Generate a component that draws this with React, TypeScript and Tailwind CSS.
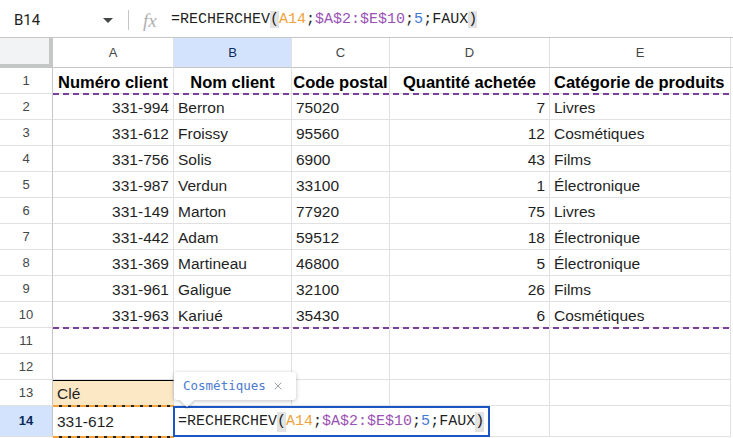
import { X } from 'lucide-react'

const widths = ['w-[53px]', 'w-[121px]', 'w-[118px]', 'w-[98px]', 'w-[160px]', 'w-[181px]']

const data = [
  ['331-994', 'Berron', '75020', '7', 'Livres'],
  ['331-612', 'Froissy', '95560', '12', 'Cosmétiques'],
  ['331-756', 'Solis', '6900', '43', 'Films'],
  ['331-987', 'Verdun', '33100', '1', 'Électronique'],
  ['331-149', 'Marton', '77920', '75', 'Livres'],
  ['331-442', 'Adam', '59512', '18', 'Électronique'],
  ['331-369', 'Martineau', '46800', '5', 'Électronique'],
  ['331-961', 'Galigue', '32100', '26', 'Films'],
  ['331-963', 'Kariué', '35430', '6', 'Cosmétiques'],
]

function Formula() {
  return (
    <>
      =RECHERCHEV<span className="bg-[#e3e3e3]">(</span>
      <span className="text-[#f0a33a]">A14</span>;
      <span className="text-[#9b51b5]">$A$2:$E$10</span>;
      <span className="text-[#3f7bd4]">5</span>;FAUX
      <span className="bg-[#e3e3e3]">)</span>
    </>
  )
}

function RowHead({ n, active }: { n: number; active?: boolean }) {
  return (
    <div
      className={`${widths[0]} shrink-0 h-full flex items-center justify-center border-r border-b border-r-[#c4c7c5] border-b-[#e1e1e1] text-[13px] ${
        active ? 'bg-[#d3e3fd] font-bold text-[#0b2a5c]' : 'text-[#444746]'
      }`}
    >
      {n}
    </div>
  )
}

function Cell({ i, children, className = '' }: { i: number; children?: React.ReactNode; className?: string }) {
  return (
    <div
      className={`${widths[i]} shrink-0 h-full flex items-end pb-[2px] leading-[18px] whitespace-nowrap border-r border-b border-[#e1e1e1] ${className}`}
    >
      {children}
    </div>
  )
}

const purpleDash =
  'absolute left-[53px] right-0 bottom-[-1px] h-[2px] bg-[repeating-linear-gradient(90deg,#7b3f9c_0_6px,transparent_6px_10px)]'

const orangeDash =
  'absolute left-[53px] w-[121px] bottom-[-1px] h-[2px] bg-[repeating-linear-gradient(90deg,#f5a236_0_6px,#222_6px_9px)]'

export default function App() {
  return (
    <div className="w-[733px] h-[438px] overflow-hidden bg-white relative font-['Liberation_Sans',Arial,sans-serif] text-[15.5px] text-[#1f1f1f]">
      {/* formula bar */}
      <div className="h-[38px] flex items-center border-b border-[#c4c7c5] pt-[3px]">
        <div className="w-[96px] pl-[14px] font-['Roboto',sans-serif] text-[15px] text-[#1f1f1f] leading-[20px]">B14</div>
        <div className="w-[24px] flex justify-center">
          <div className="w-0 h-0 border-l-[5px] border-r-[5px] border-t-[5px] border-l-transparent border-r-transparent border-t-[#444746]" />
        </div>
        <div className="ml-[8px] w-px h-[20px] bg-[#c4c7c5]" />
        <div className="ml-[14px] w-[20px] font-['Liberation_Serif',serif] italic text-[19px] text-[#b0b0b0] leading-none">
          fx
        </div>
        <div className="ml-[8px] font-['Liberation_Mono',monospace] text-[15px] text-[#1f1f1f] leading-[20px]">
          <Formula />
        </div>
      </div>

      {/* column headers */}
      <div className="h-[30px] flex">
        <div className="w-[53px] shrink-0 h-full bg-[#f1f3f4] border-r-[4px] border-b-[4px] border-[#c4c7c5]" />
        {['A', 'B', 'C', 'D', 'E'].map((l, i) => (
          <div
            key={l}
            className={`${widths[i + 1]} shrink-0 h-full flex items-center justify-center border-r border-b border-r-[#e1e1e1] border-b-[#c4c7c5] text-[13px] ${
              l === 'B' ? 'bg-[#d3e3fd] text-[#0b2a5c]' : 'text-[#444746]'
            }`}
          >
            {l}
          </div>
        ))}
        <div className="flex-1 h-full border-b border-[#c4c7c5]" />
      </div>

      {/* row 1 */}
      <div className="h-[26px] flex relative">
        <RowHead n={1} />
        {['Numéro client', 'Nom client', 'Code postal', 'Quantité achetée', 'Catégorie de produits'].map((h, i) => (
          <Cell key={h} i={i + 1} className={`font-bold text-[16.5px] text-black ${i === 4 ? 'pl-[4px]' : 'justify-center'}`}>
            {h}
          </Cell>
        ))}
        <div className={purpleDash} />
      </div>

      {data.map((r, idx) => (
        <div key={idx} className="h-[26px] flex relative">
          <RowHead n={idx + 2} />
          <Cell i={1} className="justify-end pr-[4px]">{r[0]}</Cell>
          <Cell i={2} className="pl-[4px]">{r[1]}</Cell>
          <Cell i={3} className="pl-[4px]">{r[2]}</Cell>
          <Cell i={4} className="justify-end pr-[4px]">{r[3]}</Cell>
          <Cell i={5} className="pl-[4px]">{r[4]}</Cell>
          {idx === data.length - 1 && <div className={purpleDash} />}
        </div>
      ))}

      {[11, 12].map((n) => (
        <div key={n} className="h-[26px] flex">
          <RowHead n={n} />
          {[1, 2, 3, 4, 5].map((i) => (
            <Cell key={i} i={i} />
          ))}
        </div>
      ))}

      {/* row 13 */}
      <div className="h-[26px] flex relative">
        <RowHead n={13} />
        <Cell i={1} className="pl-[4px] bg-[#fde8c6] border-t border-t-black">Clé</Cell>
        {[2, 3, 4, 5].map((i) => (
          <Cell key={i} i={i} />
        ))}
        <div className={orangeDash} />
      </div>

      {/* row 14 */}
      <div className="h-[31px] flex relative">
        <RowHead n={14} active />
        <Cell i={1} className="pl-[4px] pb-[5px]">331-612</Cell>
        {[2, 3, 4, 5].map((i) => (
          <Cell key={i} i={i} />
        ))}
        <div className={orangeDash} />

        {/* in-cell editor */}
        <div className="absolute left-[173px] top-0 w-[317px] h-[31px] bg-white border-2 border-[#1a56c4] flex items-center pl-[3px] font-['Liberation_Mono',monospace] text-[15px] text-[#1f1f1f] leading-[20px]">
          <Formula />
        </div>

        {/* result preview */}
        <div className="absolute left-[174px] top-[-34px] w-[122px] h-[28px] bg-white rounded-[3px] shadow-[0_1px_4px_rgba(0,0,0,0.25)] flex items-center pl-[9px] gap-[6px]">
          <span className="font-['DejaVu_Sans_Mono',monospace] text-[12.5px] text-[#4a7bd0]">Cosmétiques</span>
          <X size={12} className="text-[#9aa0a6]" />
          <div className="absolute left-[8px] bottom-[-5px] w-[10px] h-[10px] bg-white rotate-45 shadow-[2px_2px_2px_rgba(0,0,0,0.12)]" />
        </div>
      </div>
    </div>
  )
}
